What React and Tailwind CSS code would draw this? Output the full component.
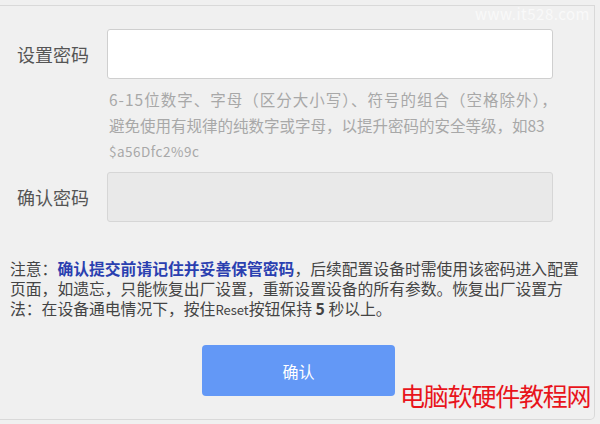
export default function App() {
  const font = { fontFamily: '"Noto Sans CJK SC", "Noto Sans", sans-serif' }
  return (
    <div className="relative w-[600px] h-[424px] bg-[#f0f0f0] overflow-hidden" style={font}>
      <div className="absolute top-[6px] right-[10px] text-[15px] leading-none text-[#f9f9f9] tracking-[0.5px]">www.it528.com</div>

      <div className="mt-[5px] w-[595px] h-[415px] border-t border-r border-b border-[#d9d9d9] rounded-br-[5px]">
        <div className="flex items-center pt-[23px]">
          <label className="w-[107px] pl-[17px] text-[18px] text-[#555]">设置密码</label>
          <input
            type="password"
            className="w-[446px] h-[50px] bg-white border border-[#cfcfcf] rounded-[3px] outline-none"
          />
        </div>

        <div className="ml-[109px] mt-[7px] w-[450px] text-[15.5px] leading-[26px] text-[#a8a8a8]">
          <p className="whitespace-nowrap tracking-[1px]">6-15位数字、字母（区分大小写）、符号的组合（空格除外），</p>
          <p className="whitespace-nowrap">避免使用有规律的纯数字或字母，以提升密码的安全等级，如83</p>
          <p className="text-[13.5px] tracking-[0.5px]">$a56Dfc2%9c</p>
        </div>

        <div className="flex items-center mt-[8px]">
          <label className="w-[107px] pl-[17px] text-[18px] text-[#555]">确认密码</label>
          <input
            type="password"
            disabled
            className="w-[446px] h-[50px] bg-[#e9e9e9] border border-[#d6d6d6] rounded-[3px] outline-none"
          />
        </div>

        <p className="mt-[37px] pl-[10px] pr-[10px] text-[15.8px] leading-[20px] text-[#444]">
          注意：<span className="text-[#2a3fb0] font-bold">确认提交前请记住并妥善保管密码</span>，后续配置设备时需使用该密码进入配置页面，如遗忘，只能恢复出厂设置，重新设置设备的所有参数。恢复出厂设置方法：在设备通电情况下，按住<span className="text-[13px]">Reset</span>按钮保持<span className="font-bold"> 5 </span>秒以上。
        </p>

        <div className="mt-[25px] pl-[202px]">
          <button className="w-[193px] h-[51px] rounded-[4px] bg-[#6398f6] text-white text-[16px]">确认</button>
        </div>
      </div>

      <div className="absolute left-[400px] top-[383px] text-[25px] leading-none text-[#e8141b] whitespace-nowrap tracking-[-1.2px]">电脑软硬件教程网</div>
    </div>
  )
}
